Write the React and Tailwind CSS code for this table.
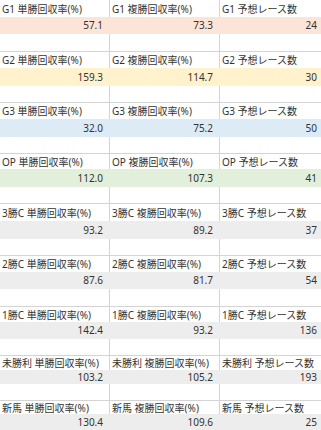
import React from 'react';

const groups = [
    { label: 'G1', values: ['57.1', '73.3', '24'], bg: 'bg-[#fce4d6]', h: ['h-[17px]', 'h-[17px]', 'h-[17px]'] },
    { label: 'G2', values: ['159.3', '114.7', '30'], bg: 'bg-[#fff2cc]', h: ['h-[17px]', 'h-[18px]', 'h-[16px]'] },
    { label: 'G3', values: ['32.0', '75.2', '50'], bg: 'bg-[#ddebf7]', h: ['h-[17px]', 'h-[18px]', 'h-[16px]'] },
    { label: 'OP', values: ['112.0', '107.3', '41'], bg: 'bg-[#e2efda]', h: ['h-[16px]', 'h-[18px]', 'h-[16px]'] },
    { label: '3勝C', values: ['93.2', '89.2', '37'], bg: 'bg-[#ededed]', h: ['h-[18px]', 'h-[18px]', 'h-[16px]'] },
    { label: '2勝C', values: ['87.6', '81.7', '54'], bg: 'bg-[#ededed]', h: ['h-[17px]', 'h-[17px]', 'h-[17px]'] },
    { label: '1勝C', values: ['142.4', '93.2', '136'], bg: 'bg-[#ededed]', h: ['h-[16px]', 'h-[17px]', 'h-[16px]'] },
    { label: '未勝利', values: ['103.2', '105.2', '193'], bg: 'bg-[#ededed]', h: ['h-[15px]', 'h-[14px]', 'h-[16px]'] },
    { label: '新馬', values: ['130.4', '109.6', '25'], bg: 'bg-[#ededed]', h: ['h-[14px]', 'h-[17px]', 'h-[17px]'] },
];

const titles = ['単勝回収率(%)', '複勝回収率(%)', '予想レース数'];
const cols = 'grid grid-cols-[110px_110px_104px] w-[324px]';

export default function App() {
    return (
        <div
            className="w-[321px] h-[430px] overflow-hidden bg-white text-[10px] text-[#333] leading-none"
            style={{ fontFamily: '"Noto Sans", "Noto Sans CJK JP", sans-serif' }}
        >
            {groups.map((g, i) => (
                <div key={g.label}>
                    <div className={`${cols} ${g.h[0]} ${i > 0 ? 'border-t border-[#d4d4d4]' : ''}`}>
                        {titles.map((t) => (
                            <div key={t} className="flex items-center pl-[2px] border-r border-[#d4d4d4] whitespace-nowrap overflow-hidden">
                                {g.label} {t}
                            </div>
                        ))}
                    </div>
                    <div className={`${cols} ${g.h[1]} ${g.bg}`}>
                        {g.values.map((v, j) => (
                            <div key={j} className="flex items-center justify-end pr-[7px] pb-[1px]">
                                {v}
                            </div>
                        ))}
                    </div>
                    <div className={`${cols} ${g.h[2]}`}>
                        {[0, 1, 2].map((k) => (
                            <div key={k} className="border-r border-[#d4d4d4]" />
                        ))}
                    </div>
                </div>
            ))}
        </div>
    );
}
